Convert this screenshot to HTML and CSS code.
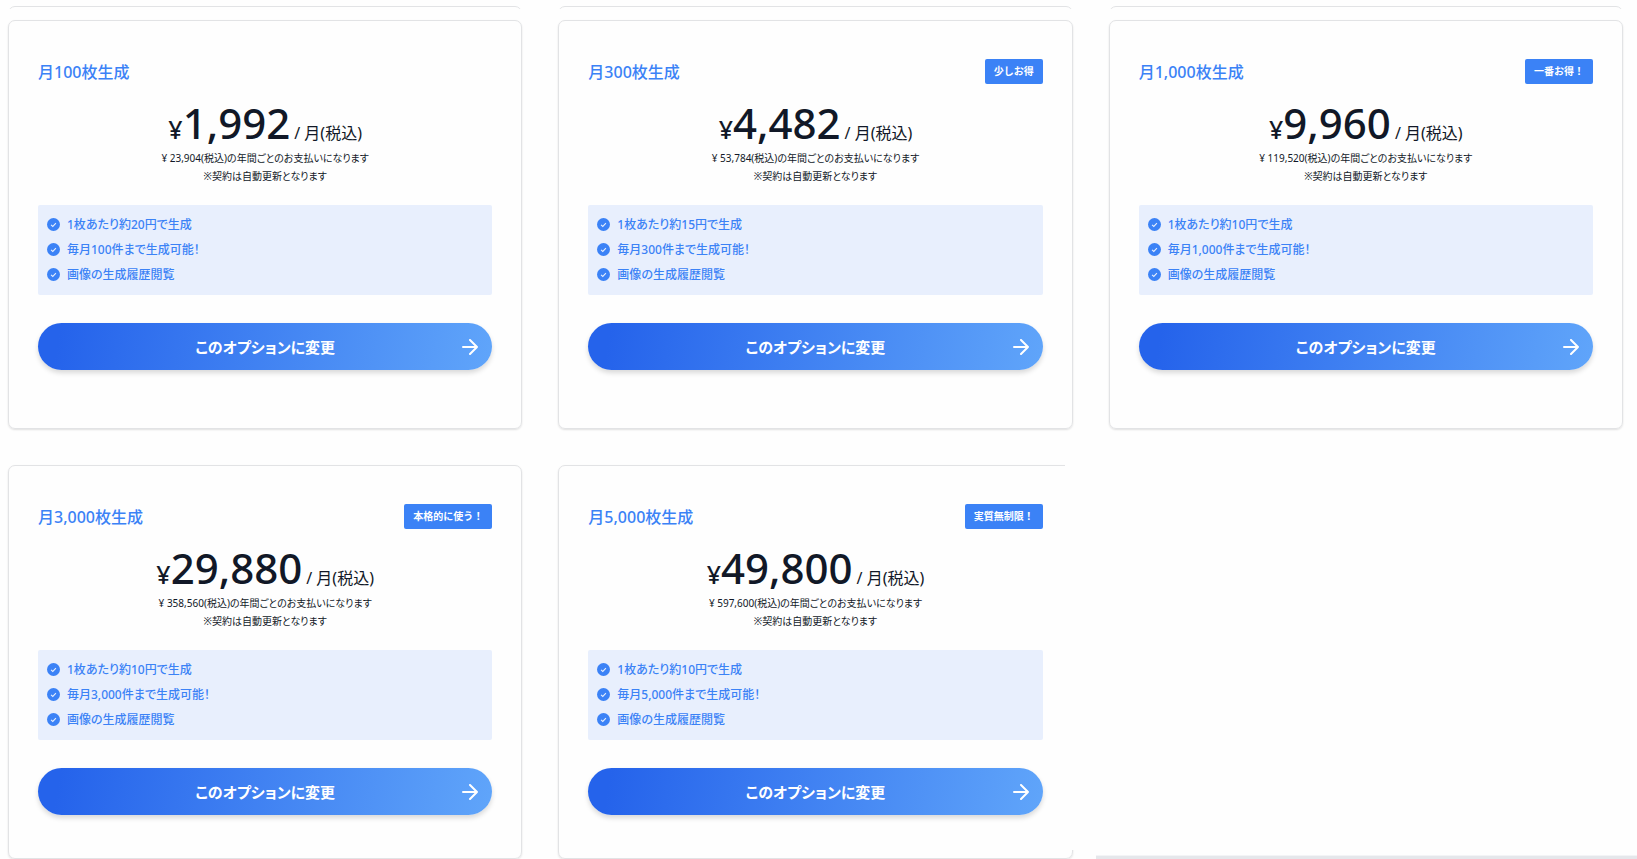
FILE: index.html
```
<!DOCTYPE html>
<html lang="ja">
<head>
<meta charset="utf-8">
<title>プラン変更</title>
<link rel="stylesheet" href="styles.css">
</head>
<body>
<svg class="sprite" aria-hidden="true">
  <symbol id="check" viewBox="0 0 24 24"><circle cx="12" cy="12" r="12" fill="currentColor"/><path d="M7.5 12.5l3.2 3 5.8-6" fill="none" stroke="#e8effd" stroke-width="2"/></symbol>
  <symbol id="arrow" viewBox="0 0 16 16"><path d="M1 8h14M8 1l7 7-7 7" fill="none" stroke="currentColor" stroke-width="2" stroke-linecap="round" stroke-linejoin="round"/></symbol>
</svg>
<main class="page">
  <div class="previous"><i class="edge"></i><i class="edge"></i><i class="edge"></i></div>
  <div class="plans">
    <section class="card">
      <header class="head"><h2 class="title">月100枚生成</h2></header>
      <p class="price"><span class="yen">¥</span><span class="amount">1,992</span><span class="unit">/ 月(税込)</span></p>
      <p class="note">¥ 23,904(税込)の年間ごとのお支払いになります<br>※契約は自動更新となります</p>
      <ul class="features">
        <li><svg class="check"><use href="#check"/></svg>1枚あたり約20円で生成</li>
        <li><svg class="check"><use href="#check"/></svg>毎月100件まで生成可能！</li>
        <li><svg class="check"><use href="#check"/></svg>画像の生成履歴閲覧</li>
      </ul>
      <button class="change" type="button">このオプションに変更<svg class="arrow"><use href="#arrow"/></svg></button>
    </section>
    <section class="card">
      <header class="head"><h2 class="title">月300枚生成</h2><span class="badge">少しお得</span></header>
      <p class="price"><span class="yen">¥</span><span class="amount">4,482</span><span class="unit">/ 月(税込)</span></p>
      <p class="note">¥ 53,784(税込)の年間ごとのお支払いになります<br>※契約は自動更新となります</p>
      <ul class="features">
        <li><svg class="check"><use href="#check"/></svg>1枚あたり約15円で生成</li>
        <li><svg class="check"><use href="#check"/></svg>毎月300件まで生成可能！</li>
        <li><svg class="check"><use href="#check"/></svg>画像の生成履歴閲覧</li>
      </ul>
      <button class="change" type="button">このオプションに変更<svg class="arrow"><use href="#arrow"/></svg></button>
    </section>
    <section class="card">
      <header class="head"><h2 class="title">月1,000枚生成</h2><span class="badge">一番お得！</span></header>
      <p class="price"><span class="yen">¥</span><span class="amount">9,960</span><span class="unit">/ 月(税込)</span></p>
      <p class="note">¥ 119,520(税込)の年間ごとのお支払いになります<br>※契約は自動更新となります</p>
      <ul class="features">
        <li><svg class="check"><use href="#check"/></svg>1枚あたり約10円で生成</li>
        <li><svg class="check"><use href="#check"/></svg>毎月1,000件まで生成可能！</li>
        <li><svg class="check"><use href="#check"/></svg>画像の生成履歴閲覧</li>
      </ul>
      <button class="change" type="button">このオプションに変更<svg class="arrow"><use href="#arrow"/></svg></button>
    </section>
    <section class="card short">
      <header class="head"><h2 class="title">月3,000枚生成</h2><span class="badge">本格的に使う！</span></header>
      <p class="price"><span class="yen">¥</span><span class="amount">29,880</span><span class="unit">/ 月(税込)</span></p>
      <p class="note">¥ 358,560(税込)の年間ごとのお支払いになります<br>※契約は自動更新となります</p>
      <ul class="features">
        <li><svg class="check"><use href="#check"/></svg>1枚あたり約10円で生成</li>
        <li><svg class="check"><use href="#check"/></svg>毎月3,000件まで生成可能！</li>
        <li><svg class="check"><use href="#check"/></svg>画像の生成履歴閲覧</li>
      </ul>
      <button class="change" type="button">このオプションに変更<svg class="arrow"><use href="#arrow"/></svg></button>
    </section>
    <section class="card short open">
      <header class="head"><h2 class="title">月5,000枚生成</h2><span class="badge">実質無制限！</span></header>
      <p class="price"><span class="yen">¥</span><span class="amount">49,800</span><span class="unit">/ 月(税込)</span></p>
      <p class="note">¥ 597,600(税込)の年間ごとのお支払いになります<br>※契約は自動更新となります</p>
      <ul class="features">
        <li><svg class="check"><use href="#check"/></svg>1枚あたり約10円で生成</li>
        <li><svg class="check"><use href="#check"/></svg>毎月5,000件まで生成可能！</li>
        <li><svg class="check"><use href="#check"/></svg>画像の生成履歴閲覧</li>
      </ul>
      <button class="change" type="button">このオプションに変更<svg class="arrow"><use href="#arrow"/></svg></button>
    </section>
    <div class="rule"></div>
  </div>
</main>
</body>
</html>
```
FILE: styles.css
```
* { box-sizing: border-box; }
body {
  margin: 0;
  background: #fefefe;
  color: #111827;
  font-family: "Noto Sans", "Noto Sans CJK JP", sans-serif;
  font-feature-settings: "palt";
}
.sprite { display: none; }
.page { padding: 6px 14px 0 8px; overflow: hidden; }
.previous, .plans {
  display: grid;
  grid-template-columns: repeat(3, 1fr);
  column-gap: 36px;
}
.previous {
  height: 3px;
  margin-bottom: 11px;
  overflow: hidden;
}
.edge {
  height: 20px;
  border: 1px solid #e2e3e5;
  border-radius: 7px;
}
.plans { row-gap: 36px; }
.card {
  position: relative;
  display: flex;
  flex-direction: column;
  padding: 38px 29px 58px;
  border: 1px solid #e2e3e5;
  border-radius: 7px;
  box-shadow: 0 1px 2px rgba(0, 0, 0, 0.12);
}
.short { padding-bottom: 43px; }
/* The last card is left open along its right side. */
.open::after {
  content: "";
  position: absolute;
  top: -4px;
  right: -4px;
  bottom: 8px;
  width: 11px;
  background: #fefefe;
}
.head {
  display: flex;
  align-items: center;
  justify-content: space-between;
  height: 25px;
}
.title {
  margin: 0;
  color: #3b82f6;
  font-size: 16px;
  font-weight: 500;
  line-height: 20px;
}
.badge {
  padding: 0 9px;
  border-radius: 2px;
  background: #3b82f6;
  color: #fff;
  font-size: 10px;
  font-weight: 700;
  font-feature-settings: normal;
  line-height: 25px;
}
.price {
  display: flex;
  align-items: baseline;
  justify-content: center;
  height: 48px;
  margin: 15px 0 2px;
  line-height: 48px;
  font-weight: 500;
}
.yen { font-size: 25px; }
.amount { font-size: 42px; }
.unit { margin-left: 4px; font-size: 16px; font-weight: 400; }
.note {
  margin: 0;
  font-size: 10px;
  line-height: 18px;
  text-align: center;
}
.features {
  margin: 20px 0 28px;
  padding: 7px 9px 8px;
  border-radius: 2px;
  background: #e8effd;
  color: #3b82f6;
  font-size: 12px;
  font-weight: 500;
  line-height: 25px;
  list-style: none;
}
.features li { display: flex; align-items: center; gap: 7px; }
.check { width: 13px; height: 13px; }
.change {
  position: relative;
  height: 47px;
  border: 0;
  border-radius: 24px;
  background: linear-gradient(100deg, #2563eb 5%, #60a5fa);
  box-shadow: 0 3px 5px rgba(0, 0, 0, 0.15);
  color: #fff;
  font: inherit;
  font-feature-settings: inherit;
  font-size: 15px;
  font-weight: 600;
}
.arrow {
  position: absolute;
  top: 16px;
  right: 14px;
  width: 16px;
  height: 16px;
}
/* Top edge of the panel that follows the plans. */
.rule {
  align-self: end;
  height: 4px;
  margin: 0 -14px 0 -13px;
  border-top: 1px solid #f3f4f6;
  background: #e5e7eb;
}
```
